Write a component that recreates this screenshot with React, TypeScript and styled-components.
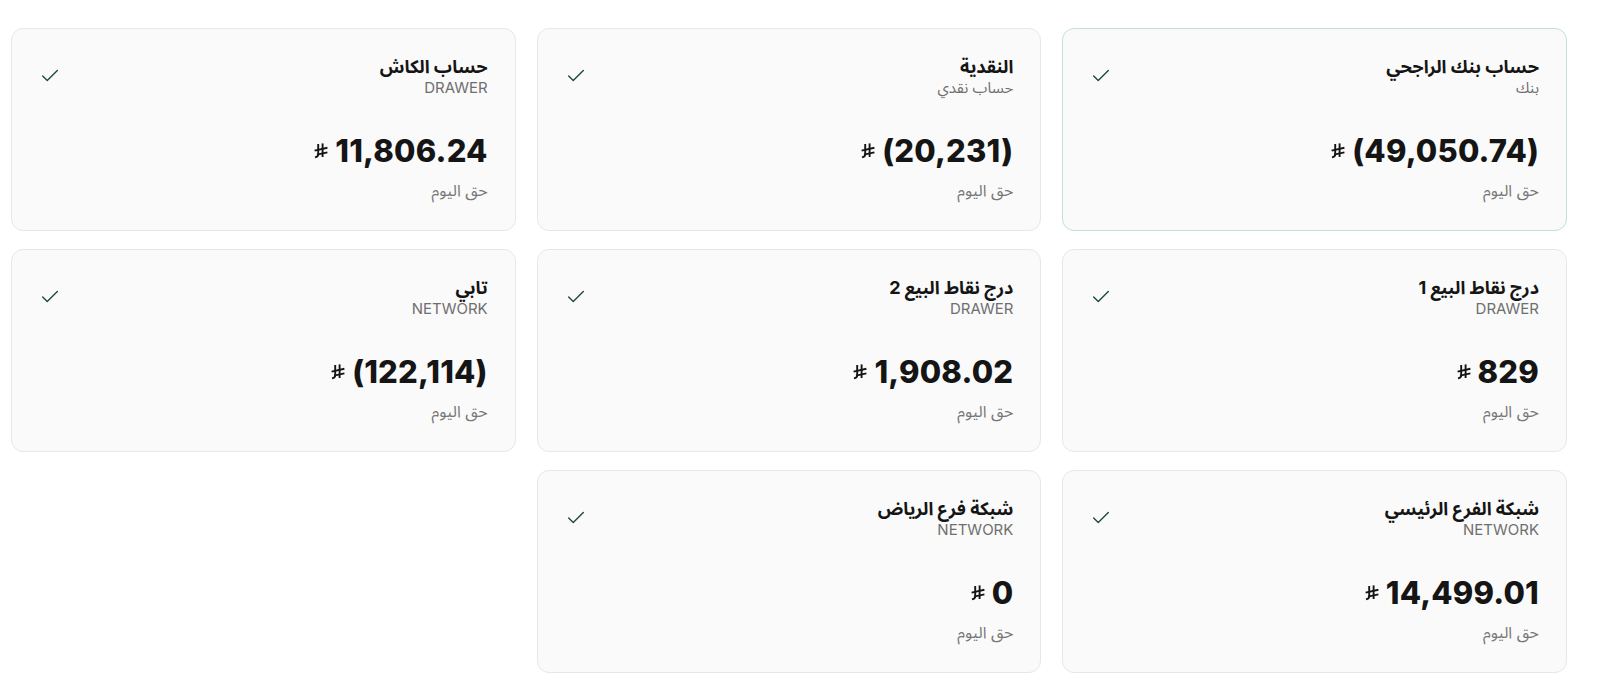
import React from 'react';
import styled, { createGlobalStyle } from 'styled-components';
import { Check } from 'lucide-react';

const GlobalStyle = createGlobalStyle`
  html, body {
    margin: 0;
    padding: 0;
    background: #ffffff;
  }
  body {
    font-family: 'Inter', 'Noto Sans Arabic', 'DejaVu Sans', sans-serif;
    color: #151515;
  }
`;

const Page = styled.main`
  padding: 28px 33px 14px 11px;
  direction: rtl;
`;

const Grid = styled.div`
  display: grid;
  grid-template-columns: repeat(3, 1fr);
  column-gap: 21px;
  row-gap: 18px;
`;

const Card = styled.div<{ $active?: boolean }>`
  box-sizing: border-box;
  height: 203px;
  display: flex;
  flex-direction: column;
  padding: 26px 27px 0 27px;
  background: #fafafa;
  border: 1px solid ${({ $active }) => ($active ? '#bfe2da' : '#e7e7e7')};
  border-radius: 12px;
`;

const Header = styled.div`
  display: flex;
  justify-content: space-between;
  align-items: center;
`;

const Titles = styled.div`
  display: flex;
  flex-direction: column;
`;

const Title = styled.h3`
  margin: 0;
  font-size: 18px;
  line-height: 24px;
  font-weight: 700;
  color: #151515;
`;

const Subtitle = styled.span`
  font-size: 15px;
  line-height: 18px;
  color: #6f6f6f;
  text-transform: uppercase;
`;

const CheckMark = styled.span`
  display: flex;
  color: #1d4a3a;
`;

const Amount = styled.div`
  margin-top: 35px;
  display: flex;
  align-items: center;
  gap: 7px;
  font-size: 31px;
  line-height: 38px;
  font-weight: 800;
  color: #151515;
  letter-spacing: 0.2px;
`;

const Value = styled.span`
  direction: ltr;
`;

const Due = styled.span`
  margin-top: 10px;
  font-size: 16px;
  line-height: 20px;
  color: #777777;
`;

// Saudi riyal sign
const Riyal: React.FC = () => (
  <svg width="14" height="16" viewBox="0 0 14 16" fill="none" stroke="#151515" strokeWidth="1.9">
    <path d="M4.2 1 V11.4 Q4.2 13.6 1 14.4" />
    <path d="M8.6 0.4 V14" />
    <path d="M0.6 7.6 L13.4 4.8" />
    <path d="M3 11.6 L13.4 9.4" />
  </svg>
);

type Account = {
  name: string;
  type: string;
  amount: string;
  active?: boolean;
};

const accounts: Account[] = [
  { name: 'حساب بنك الراجحي', type: 'بنك', amount: '(49,050.74)', active: true },
  { name: 'النقدية', type: 'حساب نقدي', amount: '(20,231)' },
  { name: 'حساب الكاش', type: 'Drawer', amount: '11,806.24' },
  { name: 'درج نقاط البيع 1', type: 'Drawer', amount: '829' },
  { name: 'درج نقاط البيع 2', type: 'Drawer', amount: '1,908.02' },
  { name: 'تابي', type: 'Network', amount: '(122,114)' },
  { name: 'شبكة الفرع الرئيسي', type: 'Network', amount: '14,499.01' },
  { name: 'شبكة فرع الرياض', type: 'Network', amount: '0' },
];

const App: React.FC = () => {
  return (
    <>
      <GlobalStyle />
      <Page>
        <Grid>
          {accounts.map((acc) => (
            <Card key={acc.name} $active={acc.active}>
              <Header>
                <Titles>
                  <Title>{acc.name}</Title>
                  <Subtitle>{acc.type}</Subtitle>
                </Titles>
                <CheckMark>
                  <Check size={22} strokeWidth={1.5} />
                </CheckMark>
              </Header>
              <Amount>
                <Value>{acc.amount}</Value>
                <Riyal />
              </Amount>
              <Due>حق اليوم</Due>
            </Card>
          ))}
        </Grid>
      </Page>
    </>
  );
};

export default App;
